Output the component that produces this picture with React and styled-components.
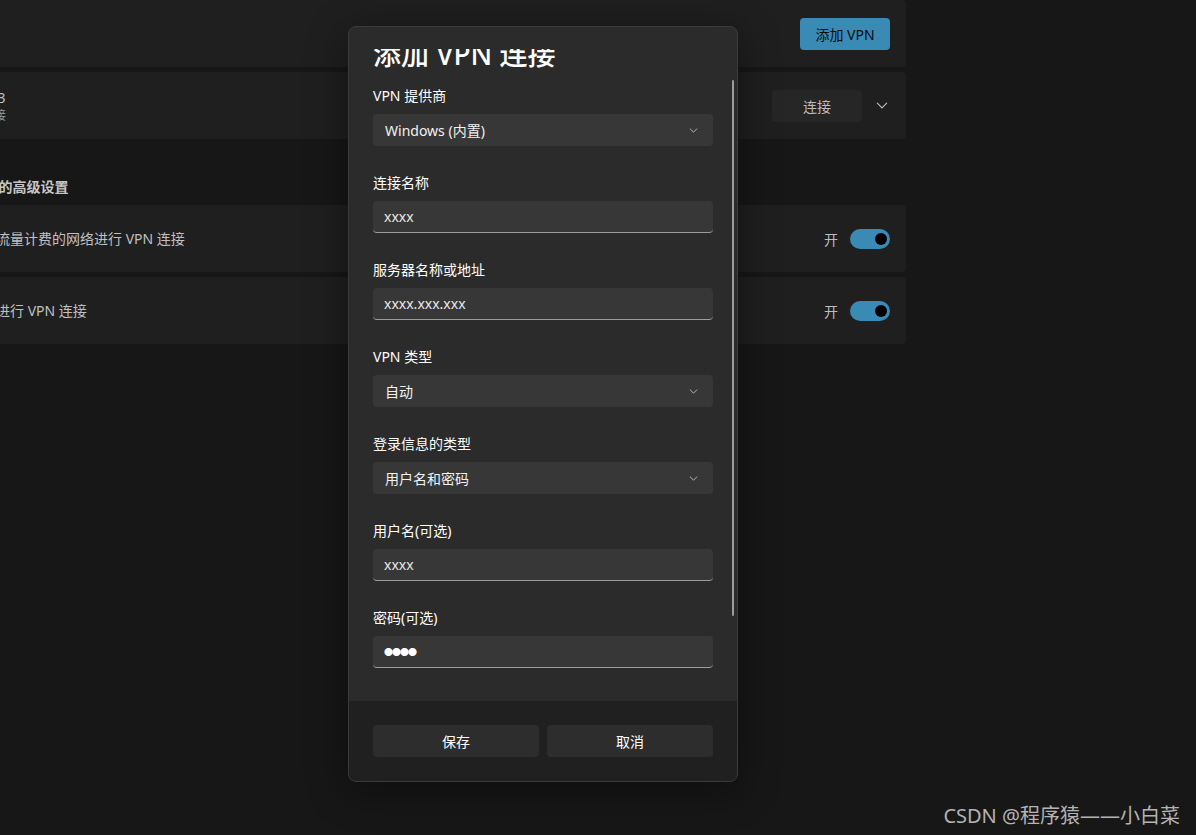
import React from 'react';
import styled, { createGlobalStyle } from 'styled-components';

const GlobalStyle = createGlobalStyle`
  html, body {
    margin: 0;
    padding: 0;
    background: #171717;
    font-family: "Noto Sans", "Noto Sans CJK SC", sans-serif;
    overflow: hidden;
  }
`;

// Background settings page
const Page = styled.div`
  position: relative;
  width: 1196px;
  height: 835px;
  overflow: hidden;
  background: #171717;
`;

const Column = styled.div`
  display: flex;
  flex-direction: column;
  gap: 5px;
  width: 1000px;
  margin-left: -94px;
`;

const Card = styled.div`
  display: flex;
  align-items: center;
  height: 67px;
  padding: 0 16px 0 20px;
  box-sizing: border-box;
  background: #1f1f1f;
  border-radius: 4px;
`;

const Spacer = styled.div`
  flex: 1;
`;

const CardText = styled.div`
  font-size: 14px;
  line-height: 20px;
  color: #c0c0c0;
  white-space: nowrap;
`;

const TextStack = styled.div`
  display: flex;
  flex-direction: column;
`;

const SubText = styled.div`
  font-size: 12px;
  line-height: 16px;
  color: #9a9a9a;
  white-space: nowrap;
`;

const IconSlot = styled.div`
  width: 20px;
  height: 20px;
  margin-right: 24px;
`;

const SectionHeader = styled.div`
  margin: 33px 0 3px 0;
  font-size: 14px;
  line-height: 20px;
  font-weight: 700;
  color: #c6c6c6;
  white-space: nowrap;
`;

const AccentButton = styled.button`
  width: 90px;
  height: 32px;
  border: none;
  border-radius: 4px;
  background: #398ab5;
  color: #0b0b0b;
  font-family: inherit;
  font-size: 14px;
`;

const PlainButton = styled.button`
  width: 90px;
  height: 32px;
  border: none;
  border-radius: 4px;
  background: #262626;
  color: #bcbcbc;
  font-family: inherit;
  font-size: 14px;
`;

const ChevronBox = styled.div`
  display: flex;
  align-items: center;
  justify-content: center;
  width: 16px;
  margin-left: 12px;
`;

const ToggleLabel = styled.span`
  font-size: 14px;
  color: #bdbdbd;
  margin-right: 12px;
`;

const Toggle = styled.div`
  position: relative;
  width: 40px;
  height: 20px;
  border-radius: 10px;
  background: #398ab5;

  &::after {
    content: '';
    position: absolute;
    top: 4px;
    right: 3px;
    width: 12px;
    height: 12px;
    border-radius: 50%;
    background: #000;
  }
`;

// Dialog
const Dialog = styled.div`
  position: absolute;
  left: 348px;
  top: 26px;
  width: 390px;
  height: 756px;
  box-sizing: border-box;
  display: flex;
  flex-direction: column;
  background: #2b2b2b;
  border: 1px solid #3b3b3b;
  border-radius: 8px;
  overflow: hidden;
  box-shadow: 0 8px 40px rgba(0, 0, 0, 0.45);
`;

const Body = styled.div`
  flex: 1;
  padding-top: 22px;
  display: flex;
  flex-direction: column;
  min-height: 0;
`;

const Viewport = styled.div`
  flex: 1;
  overflow: hidden;
  padding: 0 24px;
`;

const Title = styled.h1`
  margin: -13px 0 14px 0;
  font-size: 28px;
  line-height: 36px;
  font-weight: 500;
  color: #ffffff;
  white-space: nowrap;
`;

const Field = styled.div`
  display: flex;
  flex-direction: column;
  margin-bottom: 27px;
`;

const Label = styled.label`
  font-size: 14px;
  line-height: 20px;
  color: #ffffff;
  margin-bottom: 8px;
`;

const Select = styled.div`
  display: flex;
  align-items: center;
  justify-content: space-between;
  height: 32px;
  box-sizing: border-box;
  padding: 0 15px 0 12px;
  background: #373737;
  border-radius: 4px;
  font-size: 14px;
  color: #f2f2f2;
`;

const Input = styled.div`
  display: flex;
  align-items: center;
  height: 32px;
  box-sizing: border-box;
  padding: 0 11px;
  background: #373737;
  border-radius: 4px;
  border-bottom: 1px solid #9c9c9c;
  font-size: 14px;
  color: #e8e8e8;
`;

const Dots = styled.span`
  font-size: 9px;
  color: #ffffff;
  letter-spacing: -1px;
`;

const ScrollThumb = styled.div`
  position: absolute;
  right: 3px;
  top: 53px;
  width: 2px;
  height: 536px;
  border-radius: 1px;
  background: #9b9b9b;
`;

const Footer = styled.div`
  display: grid;
  grid-template-columns: 1fr 1fr;
  gap: 8px;
  padding: 24px;
  background: #202020;
`;

const FooterButton = styled.button`
  height: 32px;
  border: none;
  border-radius: 4px;
  background: #2d2d2d;
  color: #ffffff;
  font-family: inherit;
  font-size: 14px;
`;

const Watermark = styled.div`
  position: absolute;
  right: 16px;
  bottom: 5px;
  font-size: 20px;
  line-height: 28px;
  color: #b3b3b3;
  white-space: nowrap;
`;

const Chevron = ({ color = '#cfcfcf', w = 10, h = 6 }) => (
  <svg width={w} height={h} viewBox="0 0 10 6" fill="none">
    <path d="M1 1 L5 5 L9 1" stroke={color} strokeWidth="1" strokeLinecap="round" strokeLinejoin="round" />
  </svg>
);

const SelectField = ({ label, value }) => (
  <Field>
    <Label>{label}</Label>
    <Select>
      <span>{value}</span>
      <Chevron w={9} h={5} />
    </Select>
  </Field>
);

const TextField = ({ label, value, secret }) => (
  <Field>
    <Label>{label}</Label>
    <Input>{secret ? <Dots>{value}</Dots> : value}</Input>
  </Field>
);

export default function App() {
  return (
    <>
      <GlobalStyle />
      <Page>
        <Column>
          <Card>
            <CardText>VPN 连接</CardText>
            <Spacer />
            <AccentButton>添加 VPN</AccentButton>
          </Card>
          <Card>
            <IconSlot />
            <TextStack>
              <CardText>VPN3</CardText>
              <SubText>已连接</SubText>
            </TextStack>
            <Spacer />
            <PlainButton>连接</PlainButton>
            <ChevronBox>
              <Chevron color="#bdbdbd" w={12} h={7} />
            </ChevronBox>
          </Card>
          <SectionHeader>所有 VPN 连接的高级设置</SectionHeader>
          <Card>
            <CardText>允许通过按流量计费的网络进行 VPN 连接</CardText>
            <Spacer />
            <ToggleLabel>开</ToggleLabel>
            <Toggle />
          </Card>
          <Card>
            <CardText>漫游时允许进行 VPN 连接</CardText>
            <Spacer />
            <ToggleLabel>开</ToggleLabel>
            <Toggle />
          </Card>
        </Column>

        <Dialog>
          <Body>
            <Viewport>
              <Title>添加 VPN 连接</Title>
              <SelectField label="VPN 提供商" value="Windows (内置)" />
              <TextField label="连接名称" value="xxxx" />
              <TextField label="服务器名称或地址" value="xxxx.xxx.xxx" />
              <SelectField label="VPN 类型" value="自动" />
              <SelectField label="登录信息的类型" value="用户名和密码" />
              <TextField label="用户名(可选)" value="xxxx" />
              <TextField label="密码(可选)" value="●●●●" secret />
            </Viewport>
          </Body>
          <ScrollThumb />
          <Footer>
            <FooterButton>保存</FooterButton>
            <FooterButton>取消</FooterButton>
          </Footer>
        </Dialog>

        <Watermark>CSDN @程序猿——小白菜</Watermark>
      </Page>
    </>
  );
}
